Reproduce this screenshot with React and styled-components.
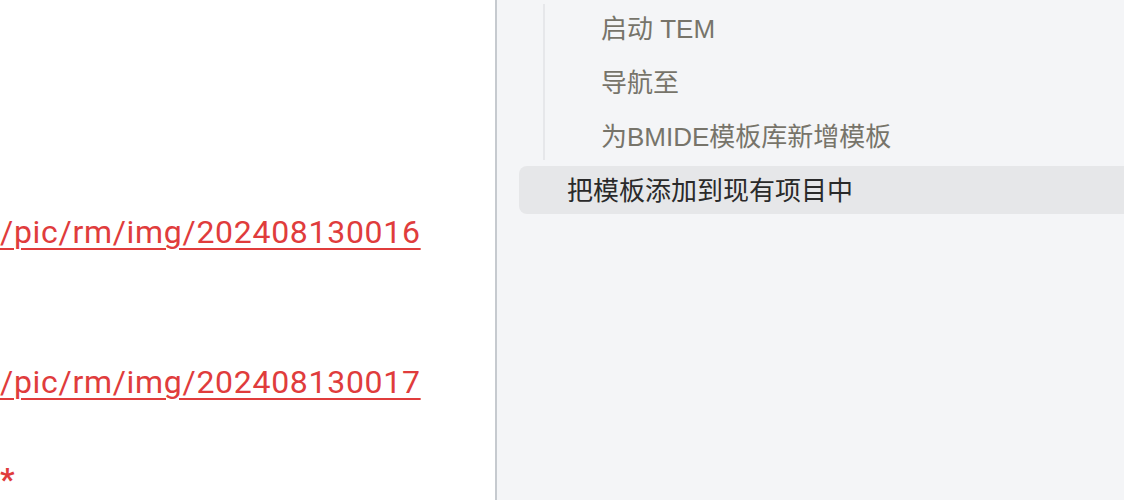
import React from "react";
import styled, { createGlobalStyle } from "styled-components";

const Global = createGlobalStyle`
  html, body { margin: 0; padding: 0; height: 100%; }
  body { background: #ffffff; overflow: hidden; }
  #root { height: 100%; }
`;

const Page = styled.div`
  display: flex;
  width: 1124px;
  height: 500px;
  overflow: hidden;
`;

const Content = styled.main`
  width: 495px;
  flex: none;
  background: #ffffff;
  padding-top: 208px;
  box-sizing: border-box;
  overflow: hidden;
  font-family: Roboto, "Liberation Sans", sans-serif;
  font-size: 32px;
  line-height: 48px;
`;

const Para = styled.p`
  margin: 0 0 ${(p) => p.$gap}px 0;
  white-space: nowrap;
`;

const Link = styled.a`
  color: #e03c3c;
  letter-spacing: 0.7px;
  text-decoration: underline;
  text-decoration-thickness: 2px;
  text-underline-offset: 5px;
`;

const Star = styled.span`
  color: #e03c3c;
  font-weight: 700;
`;

const Divider = styled.div`
  width: 2px;
  flex: none;
  background: #c6cacf;
`;

const Sidebar = styled.aside`
  flex: 1;
  background: #f4f5f7;
  padding: 4px 0 0 22px;
  overflow: hidden;
  font-family: "Liberation Sans", "Noto Sans CJK SC", sans-serif;
  font-size: 26px;
`;

const SubList = styled.ul`
  list-style: none;
  margin: 0 0 6px 24px;
  padding: 0;
  border-left: 2px solid #e6e7ea;
  display: flex;
  flex-direction: column;
  gap: 6px;
`;

const SubItem = styled.li`
  height: 48px;
  box-sizing: border-box;
  padding: 0 0 4px 56px;
  display: flex;
  align-items: center;
  color: #77746a;
  white-space: nowrap;
`;

const NavItem = styled.div`
  height: 48px;
  box-sizing: border-box;
  padding: 0 0 4px 48px;
  display: flex;
  align-items: center;
  border-radius: 8px 0 0 8px;
  background: ${(p) => (p.$active ? "#e6e7e9" : "transparent")};
  color: #2a2a2a;
  white-space: nowrap;
`;

export default function App() {
  return (
    <>
      <Global />
      <Page>
        <Content>
          <Para $gap={102}>
            <Link href="#">/pic/rm/img/202408130016</Link>
          </Para>
          <Para $gap={49}>
            <Link href="#">/pic/rm/img/202408130017</Link>
          </Para>
          <Para $gap={0}>
            <Star>*</Star>
          </Para>
        </Content>
        <Divider />
        <Sidebar>
          <SubList>
            <SubItem>启动 TEM</SubItem>
            <SubItem>导航至</SubItem>
            <SubItem>为BMIDE模板库新增模板</SubItem>
          </SubList>
          <NavItem $active>把模板添加到现有项目中</NavItem>
        </Sidebar>
      </Page>
    </>
  );
}
